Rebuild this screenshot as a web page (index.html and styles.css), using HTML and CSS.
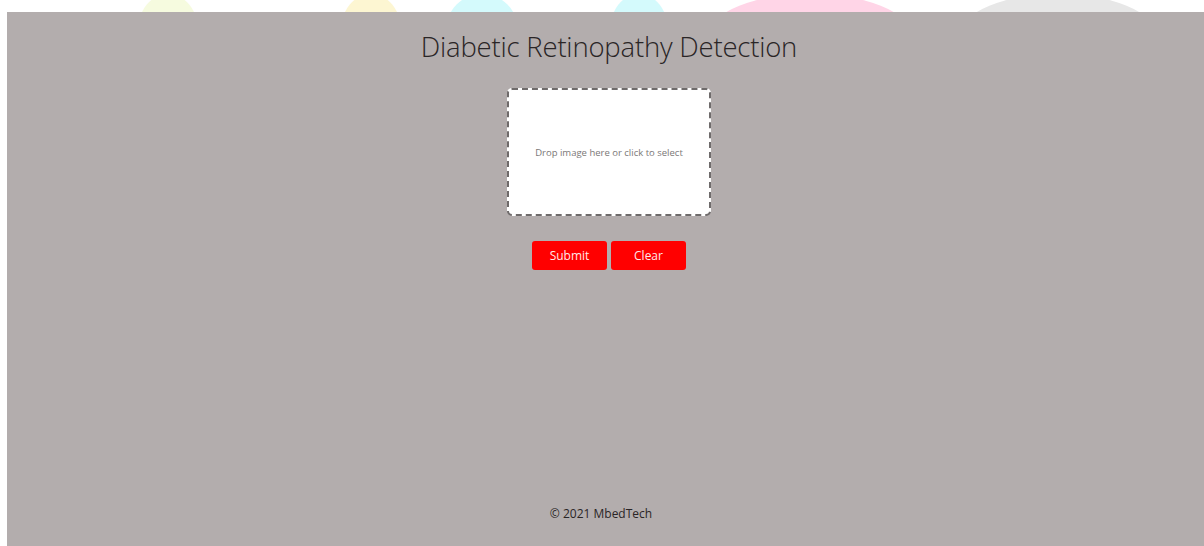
FILE: index.html
```html
<!DOCTYPE html>
<html lang="en">
<head>
<meta charset="utf-8">
<title>Diabetic Retinopathy Detection</title>
<link rel="stylesheet" href="styles.css">
</head>
<body>
  <div class="backdrop">
    <svg class="backdrop-art" width="1204" height="12" viewBox="0 0 1204 12" aria-hidden="true">
      <ellipse cx="168" cy="30" rx="30" ry="36" fill="#f6fbdf"/>
      <ellipse cx="371" cy="30" rx="30" ry="36" fill="#fdf6d2"/>
      <ellipse cx="482" cy="30" rx="36" ry="36" fill="#d4fafc"/>
      <ellipse cx="639" cy="30" rx="29" ry="36" fill="#d4fafc"/>
      <ellipse cx="810" cy="34" rx="100" ry="40" fill="#ffd5e7"/>
      <ellipse cx="1058" cy="34" rx="97" ry="40" fill="#e7e7e7"/>
    </svg>
  </div>
  <main class="panel">
    <h1 class="title">Diabetic Retinopathy Detection</h1>
    <div class="dropzone">
      <p class="dropzone-text">Drop image here or click to select</p>
    </div>
    <div class="actions">
      <button class="btn" type="button">Submit</button>
      <button class="btn" type="button">Clear</button>
    </div>
    <footer class="footer">© 2021 MbedTech</footer>
  </main>
</body>
</html>
```

FILE: styles.css
```css
html, body {
  margin: 0;
  padding: 0;
  background: #ffffff;
  overflow: hidden;
}

body {
  font-family: "Open Sans", "Noto Sans", sans-serif;
  width: 1204px;
  height: 546px;
}

.backdrop {
  height: 12px;
}

.backdrop-art {
  display: block;
}

.panel {
  margin-left: 7px;
  width: 1204px;
  height: 534px;
  background: #b3adad;
  display: flex;
  flex-direction: column;
  align-items: center;
}

.title {
  margin: 16px 0 0;
  font-weight: 300;
  font-size: 27.5px;
  line-height: 38px;
  color: #2a2526;
  letter-spacing: -0.2px;
}

.dropzone {
  margin-top: 22px;
  width: 200px;
  height: 124px;
  box-sizing: content-box;
  background: #ffffff;
  border: 2px dashed #6f6b6b;
  border-radius: 5px;
  display: flex;
  align-items: center;
  justify-content: center;
}

.dropzone-text {
  margin: 0;
  font-size: 9.5px;
  color: #7b7777;
}

.actions {
  margin-top: 25px;
  display: flex;
  gap: 4px;
}

.btn {
  width: 75px;
  height: 29px;
  border: none;
  border-radius: 3px;
  background: #ff0000;
  color: #ffe9e9;
  font-family: "Open Sans", "Noto Sans", sans-serif;
  font-size: 12px;
  padding: 0;
}

.footer {
  margin-top: auto;
  margin-bottom: 24px;
  margin-right: 16px;
  font-size: 12px;
  color: #2a2526;
}
```
